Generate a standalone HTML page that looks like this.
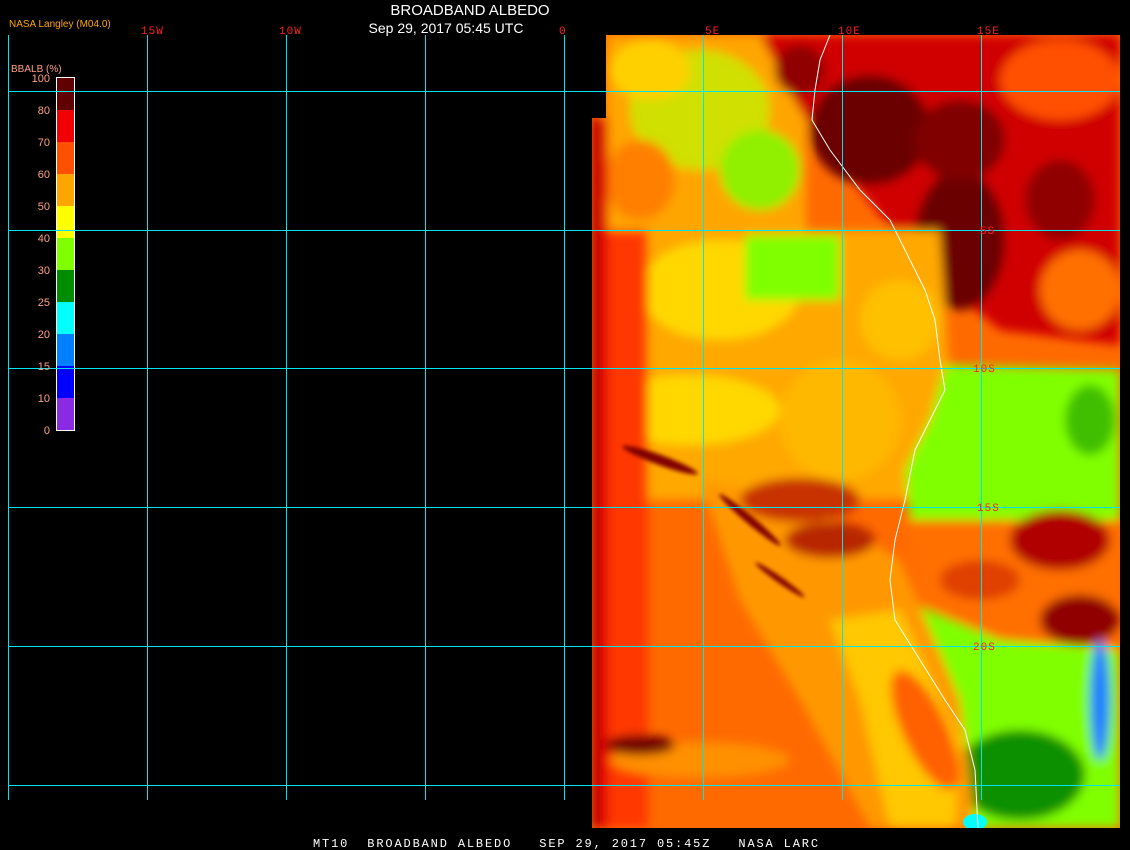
<!DOCTYPE html>
<html><head><meta charset="utf-8"><style>
html,body{margin:0;padding:0;background:#000;width:1130px;height:850px;overflow:hidden}
svg{display:block}
</style></head><body>
<svg width="1130" height="850" viewBox="0 0 1130 850" xmlns="http://www.w3.org/2000/svg" font-family="Liberation Sans, sans-serif">
<defs>
<filter id="b" x="-20%" y="-20%" width="140%" height="140%"><feGaussianBlur stdDeviation="5"/></filter>
<filter id="b2"><feGaussianBlur stdDeviation="2"/></filter>
<clipPath id="dc"><path d="M606 35H1120V828H592V118H606Z"/></clipPath>
</defs>
<rect width="1130" height="850" fill="#000"/>
<g clip-path="url(#dc)">
<rect x="590" y="30" width="540" height="800" fill="#ff6a00"/>
<g filter="url(#b)">
<rect x="606" y="35" width="200" height="200" fill="#ffa500"/>
<ellipse cx="700" cy="110" rx="70" ry="60" fill="#d0e000"/>
<ellipse cx="760" cy="170" rx="40" ry="40" fill="#90f000"/>
<ellipse cx="650" cy="70" rx="40" ry="30" fill="#ffd000"/>
<ellipse cx="640" cy="180" rx="35" ry="40" fill="#ff8000"/>
<path d="M760 35H1120V345L1000 330L920 265L860 190L800 110Z" fill="#d00000"/>
<ellipse cx="870" cy="130" rx="60" ry="55" fill="#6a0000"/>
<ellipse cx="960" cy="240" rx="45" ry="70" fill="#6a0000"/>
<ellipse cx="960" cy="140" rx="45" ry="40" fill="#800000"/>
<ellipse cx="1060" cy="200" rx="35" ry="40" fill="#900000"/>
<ellipse cx="1060" cy="80" rx="60" ry="40" fill="#ff5000"/>
<ellipse cx="1080" cy="290" rx="40" ry="40" fill="#ff7000"/>
<ellipse cx="800" cy="70" rx="25" ry="25" fill="#900000"/>
<path d="M600 230H940L950 380L930 500H600Z" fill="#ffa800"/>
<ellipse cx="720" cy="290" rx="80" ry="50" fill="#ffd800"/>
<ellipse cx="690" cy="410" rx="90" ry="35" fill="#ffd800"/>
<ellipse cx="840" cy="420" rx="60" ry="60" fill="#ffb800"/>
<ellipse cx="900" cy="320" rx="40" ry="40" fill="#ffc000"/>
<rect x="745" y="235" width="95" height="65" fill="#80ff00"/>
<rect x="592" y="118" width="16" height="710" fill="#e00000"/>
<rect x="592" y="118" width="6" height="710" fill="#a00000"/>
<rect x="608" y="230" width="40" height="598" fill="#ff3800"/>
<path d="M945 365L1120 370V520L960 520L910 520L905 470L930 420Z" fill="#80ff00"/>
<ellipse cx="1090" cy="420" rx="25" ry="35" fill="#3fbf00"/>
<path d="M905 520H1120V650L1000 640L920 600Z" fill="#ff7000"/>
<ellipse cx="1060" cy="540" rx="50" ry="30" fill="#b00000"/>
<ellipse cx="1080" cy="620" rx="40" ry="25" fill="#900000"/>
<ellipse cx="980" cy="580" rx="40" ry="20" fill="#e04000"/>
<path d="M905 600L1000 640L1120 650V828H975L950 740L910 660Z" fill="#80ff00"/>
<ellipse cx="1020" cy="775" rx="65" ry="45" fill="#109000"/>
<ellipse cx="950" cy="800" rx="20" ry="18" fill="#109000"/>
<ellipse cx="1100" cy="700" rx="10" ry="60" fill="#2080ff"/>
<path d="M700 480L800 500L900 560L960 700L975 828H870L800 700L740 600Z" fill="#ff9800"/>
<path d="M830 620L900 610L960 740L955 828L890 828L860 700Z" fill="#ffc800"/>
<ellipse cx="925" cy="730" rx="22" ry="65" fill="#ff6000" transform="rotate(-25 925 730)"/>
<ellipse cx="800" cy="500" rx="60" ry="22" fill="#c83000"/>
<ellipse cx="830" cy="540" rx="45" ry="18" fill="#b82800"/>
<ellipse cx="700" cy="760" rx="90" ry="18" fill="#ff9000"/>
<ellipse cx="640" cy="745" rx="35" ry="10" fill="#700000"/>
</g>
<g filter="url(#b2)" fill="#800000">
<ellipse cx="750" cy="520" rx="40" ry="4" transform="rotate(40 750 520)"/>
<ellipse cx="780" cy="580" rx="30" ry="3" transform="rotate(35 780 580)"/>
<ellipse cx="660" cy="460" rx="40" ry="5" transform="rotate(20 660 460)"/>
</g>
<ellipse cx="975" cy="822" rx="12" ry="8" fill="#00ffff"/>
<polyline fill="none" stroke="#fff" stroke-width="1" points="838,5 832,30 820,60 815,90 812,120 830,150 860,190 890,220 905,250 915,270 925,290 935,320 940,360 945,390 930,420 915,450 905,500 895,540 890,580 895,620 920,660 945,700 965,730 975,770 978,828"/>
</g>
<g stroke="#00e5ee" stroke-width="1">
<line x1="8.5" y1="35" x2="8.5" y2="800"/><line x1="147.5" y1="35" x2="147.5" y2="800"/><line x1="286.5" y1="35" x2="286.5" y2="800"/><line x1="425.5" y1="35" x2="425.5" y2="800"/><line x1="564.5" y1="35" x2="564.5" y2="800"/><line x1="703.5" y1="35" x2="703.5" y2="800"/><line x1="842.5" y1="35" x2="842.5" y2="800"/><line x1="981.5" y1="35" x2="981.5" y2="800"/>
<line x1="8" y1="91.5" x2="1120" y2="91.5"/><line x1="8" y1="230.5" x2="1120" y2="230.5"/><line x1="8" y1="368.5" x2="1120" y2="368.5"/><line x1="8" y1="507.5" x2="1120" y2="507.5"/><line x1="8" y1="646.5" x2="1120" y2="646.5"/><line x1="8" y1="785.5" x2="1120" y2="785.5"/>
</g>
<g fill="#ff2020" font-family="Liberation Mono, monospace" font-size="11" letter-spacing="1">
<text x="141" y="34">15W</text><text x="279" y="34">10W</text><text x="559" y="34">0</text><text x="705" y="34">5E</text><text x="838" y="34">10E</text><text x="977" y="34">15E</text>
<text x="980" y="234">5S</text><text x="973" y="372">10S</text><text x="977" y="511">15S</text><text x="973" y="650">20S</text>
</g>
<text x="470" y="15" fill="#fff" font-size="15" text-anchor="middle">BROADBAND ALBEDO</text>
<text x="446" y="33" fill="#fff" font-size="14" text-anchor="middle">Sep 29, 2017 05:45 UTC</text>
<text x="9" y="27" fill="#ffa500" font-size="10">NASA Langley (M04.0)</text>
<text x="11" y="72" fill="#ffa080" font-size="10">BBALB (%)</text>
<g>
<rect x="56" y="77" width="18" height="33" fill="#600000"/>
<rect x="56" y="110" width="18" height="32" fill="#f00000"/>
<rect x="56" y="142" width="18" height="32" fill="#ff5000"/>
<rect x="56" y="174" width="18" height="32" fill="#ffa500"/>
<rect x="56" y="206" width="18" height="32" fill="#ffff00"/>
<rect x="56" y="238" width="18" height="32" fill="#80ff00"/>
<rect x="56" y="270" width="18" height="32" fill="#008c00"/>
<rect x="56" y="302" width="18" height="32" fill="#00ffff"/>
<rect x="56" y="334" width="18" height="32" fill="#0080ff"/>
<rect x="56" y="366" width="18" height="32" fill="#0000ff"/>
<rect x="56" y="398" width="18" height="32" fill="#8a2be2"/>
<rect x="56.5" y="77.5" width="18" height="353" fill="none" stroke="#fff"/>
</g>
<line x1="8" y1="91.5" x2="1120" y2="91.5" stroke="#00e5ee"/>
<line x1="8" y1="230.5" x2="100" y2="230.5" stroke="#00e5ee"/>
<line x1="8" y1="368.5" x2="100" y2="368.5" stroke="#00e5ee"/>
<g fill="#ffa080" font-size="11" text-anchor="end">
<text x="50" y="82">100</text><text x="50" y="114">80</text><text x="50" y="146">70</text><text x="50" y="178">60</text><text x="50" y="210">50</text><text x="50" y="242">40</text><text x="50" y="274">30</text><text x="50" y="306">25</text><text x="50" y="338">20</text><text x="50" y="370">15</text><text x="50" y="402">10</text><text x="50" y="434">0</text>
</g>
<text x="313" y="847" fill="#fff" font-family="Liberation Mono, monospace" font-size="12" letter-spacing="1.85" xml:space="preserve">MT10  BROADBAND ALBEDO   SEP 29, 2017 05:45Z   NASA LARC</text>
</svg>
</body></html>
